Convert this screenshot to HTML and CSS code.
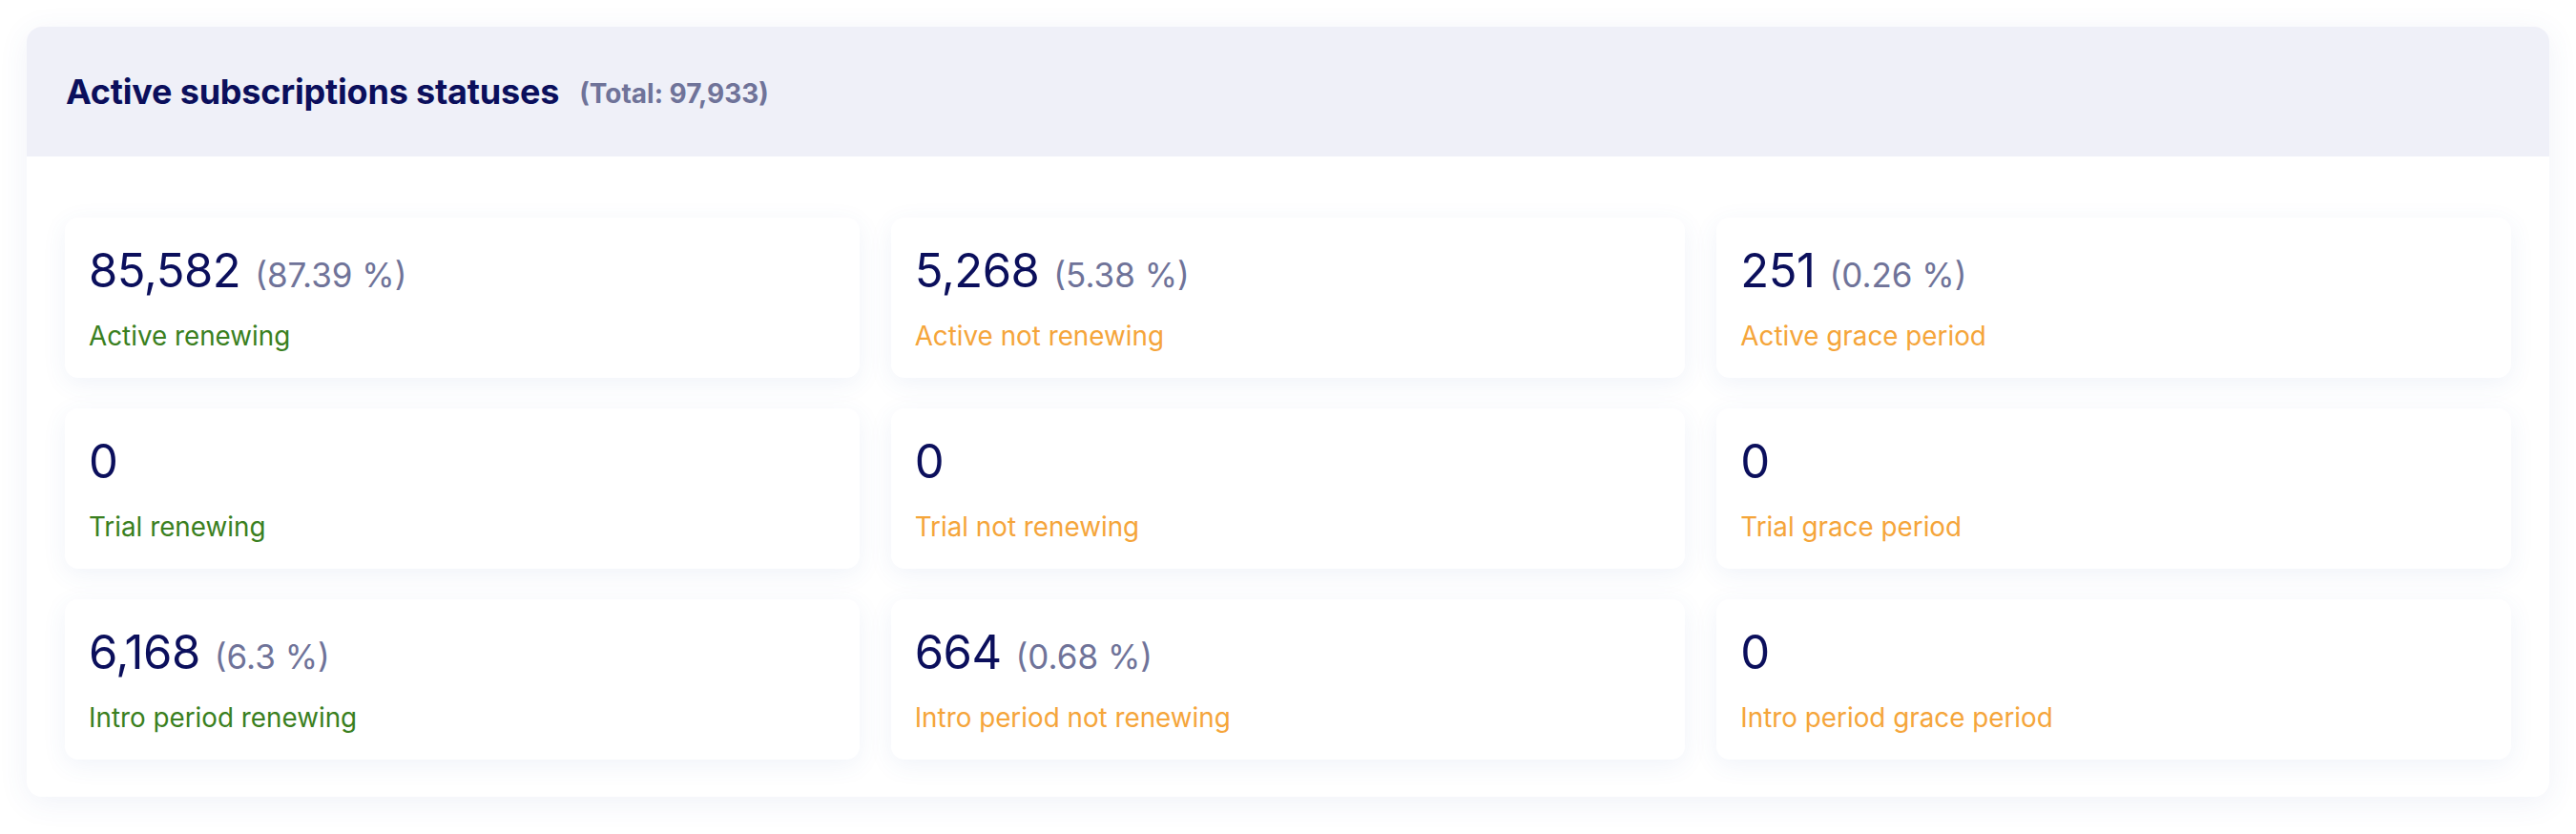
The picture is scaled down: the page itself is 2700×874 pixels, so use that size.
FILE: index.html
```html
<!DOCTYPE html>
<html lang="en">
<head>
<meta charset="utf-8">
<title>Active subscriptions statuses</title>
<link rel="stylesheet" href="styles.css">
</head>
<body>
<div class="page">
  <section class="card">
    <header class="card-header">
      <h2 class="title">Active subscriptions statuses</h2>
      <span class="total">(Total: 97,933)</span>
    </header>
    <div class="card-body">
      <div class="grid">
        <div class="tile"><div class="value"><span class="num">85,582</span><span class="pct">(87.39 %)</span></div><div class="label green">Active renewing</div></div>
        <div class="tile"><div class="value"><span class="num">5,268</span><span class="pct">(5.38 %)</span></div><div class="label orange">Active not renewing</div></div>
        <div class="tile"><div class="value"><span class="num">251</span><span class="pct">(0.26 %)</span></div><div class="label orange">Active grace period</div></div>
        <div class="tile"><div class="value"><span class="num">0</span></div><div class="label green">Trial renewing</div></div>
        <div class="tile"><div class="value"><span class="num">0</span></div><div class="label orange">Trial not renewing</div></div>
        <div class="tile"><div class="value"><span class="num">0</span></div><div class="label orange">Trial grace period</div></div>
        <div class="tile"><div class="value"><span class="num">6,168</span><span class="pct">(6.3 %)</span></div><div class="label green">Intro period renewing</div></div>
        <div class="tile"><div class="value"><span class="num">664</span><span class="pct">(0.68 %)</span></div><div class="label orange">Intro period not renewing</div></div>
        <div class="tile"><div class="value"><span class="num">0</span></div><div class="label orange">Intro period grace period</div></div>
      </div>
    </div>
  </section>
</div>
</body>
</html>
```
FILE: styles.css
```css
* { box-sizing: border-box; }
html, body { margin: 0; padding: 0; background: #ffffff; }
body { font-family: Inter, "Noto Sans", "Liberation Sans", sans-serif; }

.page {
  padding: 28px 28px 39px 28px;
}

.card {
  background: #ffffff;
  border-radius: 16px;
  overflow: hidden;
  box-shadow: 0 6px 32px rgba(60, 90, 170, 0.08);
}

.card-header {
  height: 136px;
  background: #eff0f8;
  display: flex;
  align-items: center;
  padding: 0 41px;
}

.title {
  margin: 0;
  font-size: 36px;
  font-weight: 700;
  color: #0b0f5c;
  letter-spacing: -0.2px;
}

.total {
  margin-left: 21px;
  margin-top: 3px;
  font-size: 28px;
  font-weight: 700;
  color: #6f7399;
}

.card-body {
  padding: 64px 40px 39px 40px;
}

.grid {
  display: grid;
  grid-template-columns: repeat(3, 1fr);
  column-gap: 33px;
  row-gap: 32px;
}

.tile {
  height: 168px;
  background: #ffffff;
  border-radius: 14px;
  padding: 26px 25px 0 25px;
  box-shadow: 0 6px 26px rgba(60, 100, 180, 0.08);
  display: flex;
  flex-direction: column;
}

.value {
  height: 60px;
  line-height: 60px;
  white-space: nowrap;
}

.num {
  font-size: 49px;
  font-weight: 400;
  color: #0b0f5c;
  letter-spacing: -0.5px;
}

.pct {
  margin-left: 15px;
  font-size: 35px;
  font-weight: 400;
  color: #6f7399;
}

.label {
  margin-top: 21px;
  font-size: 27.8px;
  line-height: 34px;
  font-weight: 400;
}

.green { color: #3a7f20; }
.orange { color: #f5a53a; }
```
